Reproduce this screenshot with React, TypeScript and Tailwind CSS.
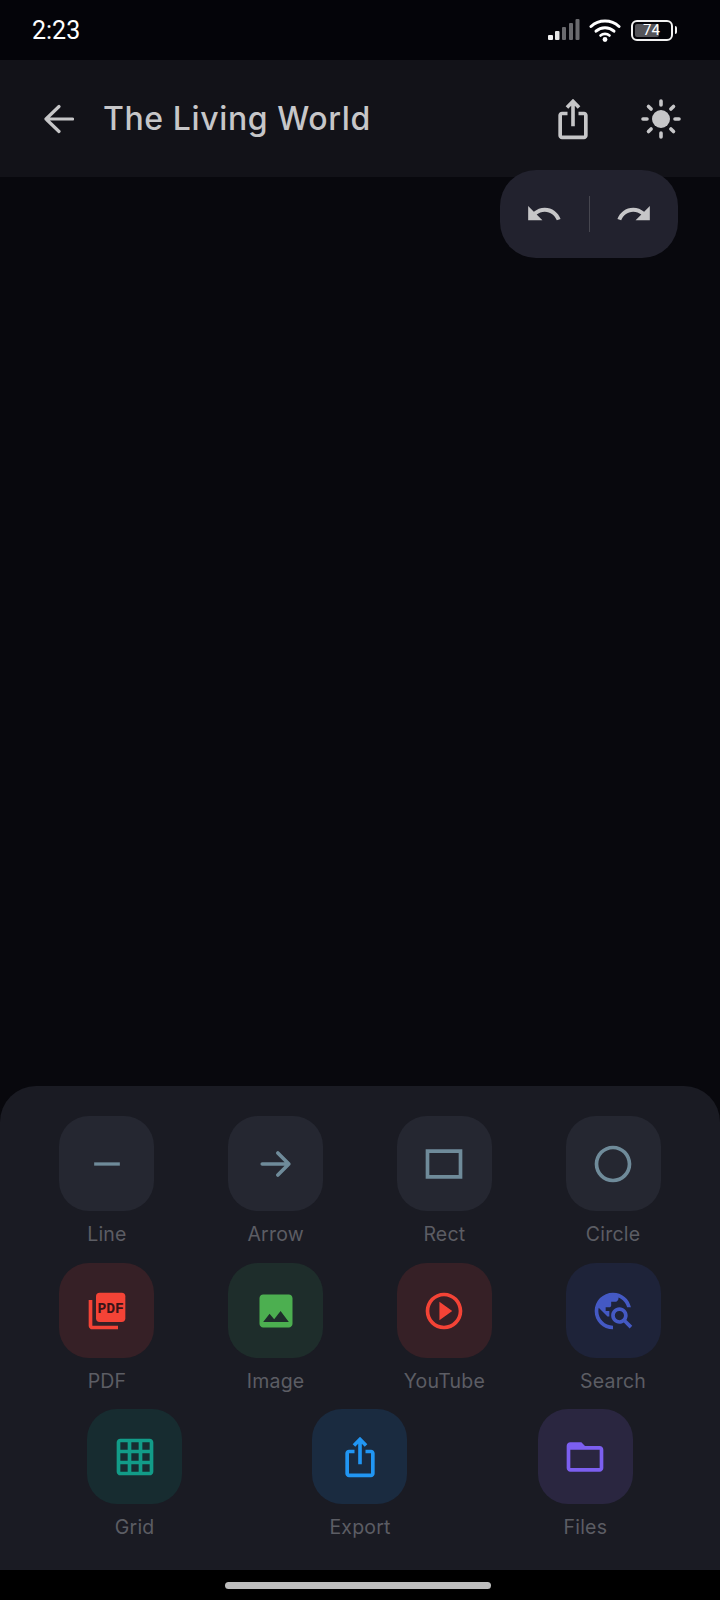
import type { ReactNode } from "react";

type Tool = {
  label: string;
  bg: string;
  color: string;
  icon: ReactNode;
};

function Icon({ className, children }: { className: string; children: ReactNode }) {
  return (
    <svg viewBox="0 0 24 24" fill="currentColor" className={className}>
      {children}
    </svg>
  );
}

const SHARE =
  "M16 5l-1.42 1.42-1.59-1.59V16h-1.98V4.83L9.42 6.42 8 5l4-4 4 4zm4 5v11c0 1.1-.9 2-2 2H6c-1.11 0-2-.9-2-2V10c0-1.11.89-2 2-2h3v2H6v11h12V10h-3V8h3c1.1 0 2 .89 2 2z";

const row1: Tool[] = [
  {
    label: "Line",
    bg: "bg-[#252731]",
    color: "text-[#6f8b9a]",
    icon: <path d="M5 11.1h14v1.8H5z" />,
  },
  {
    label: "Arrow",
    bg: "bg-[#252731]",
    color: "text-[#6f8b9a]",
    icon: (
      <path d="M4.5 12H19M13 6l6 6-6 6" fill="none" stroke="currentColor" strokeWidth="2" strokeLinecap="round" strokeLinejoin="round" />
    ),
  },
  {
    label: "Rect",
    bg: "bg-[#252731]",
    color: "text-[#6f8b9a]",
    icon: <path d="M2 4v16h20V4H2zm18 14H4V6h16v12z" />,
  },
  {
    label: "Circle",
    bg: "bg-[#252731]",
    color: "text-[#6f8b9a]",
    icon: (
      <path d="M12 2C6.47 2 2 6.47 2 12s4.47 10 10 10 10-4.47 10-10S17.53 2 12 2zm0 18c-4.41 0-8-3.59-8-8s3.59-8 8-8 8 3.59 8 8-3.59 8-8 8z" />
    ),
  },
];

const row2: Tool[] = [
  {
    label: "PDF",
    bg: "bg-[#362026]",
    color: "text-[#f44336]",
    icon: (
      <>
        <rect x="6" y="2" width="16" height="16" rx="2" />
        <path d="M4 6H2v14c0 1.1.9 2 2 2h14v-2H4V6z" />
        <text x="14" y="13" textAnchor="middle" fontSize="8" fontWeight="700" fill="#3a1418" className="font-['Liberation_Mono',monospace]">
          PDF
        </text>
      </>
    ),
  },
  {
    label: "Image",
    bg: "bg-[#1e2d2b]",
    color: "text-[#4caf50]",
    icon: (
      <path d="M21 19V5c0-1.1-.9-2-2-2H5c-1.1 0-2 .9-2 2v14c0 1.1.9 2 2 2h14c1.1 0 2-.9 2-2zM8.5 13.5l2.5 3.01L14.5 12l4.5 6H5l3.5-4.5z" />
    ),
  },
  {
    label: "YouTube",
    bg: "bg-[#362026]",
    color: "text-[#f44336]",
    icon: (
      <path d="M9.5 17V7l7 5zM12 2C6.48 2 2 6.48 2 12s4.48 10 10 10 10-4.48 10-10S17.52 2 12 2zm0 18c-4.41 0-8-3.59-8-8s3.59-8 8-8 8 3.59 8 8-3.59 8-8 8z" />
    ),
  },
  {
    label: "Search",
    bg: "bg-[#1e2339]",
    color: "text-[#4459c4]",
    icon: (
      <path d="M19.3 16.9c.4-.7.7-1.5.7-2.4 0-2.5-2-4.5-4.5-4.5S11 12 11 14.5s2 4.5 4.5 4.5c.9 0 1.7-.3 2.4-.7l3.2 3.2 1.4-1.4-3.2-3.2zm-3.8.1c-1.4 0-2.5-1.1-2.5-2.5s1.1-2.5 2.5-2.5 2.5 1.1 2.5 2.5-1.1 2.5-2.5 2.5zM12 20v2C6.48 22 2 17.52 2 12S6.48 2 12 2c4.84 0 8.87 3.44 9.8 8h-2.07c-.64-2.46-2.4-4.47-4.73-5.41V5c0 1.1-.9 2-2 2h-2v2c0 .55-.45 1-1 1H8v2h2v3H9l-4.79-4.79C4.08 10.79 4 11.38 4 12c0 4.41 3.59 8 8 8z" />
    ),
  },
];

const row3: Tool[] = [
  {
    label: "Grid",
    bg: "bg-[#172c30]",
    color: "text-[#129c88]",
    icon: (
      <path d="M20 2H4c-1.1 0-2 .9-2 2v16c0 1.1.9 2 2 2h16c1.1 0 2-.9 2-2V4c0-1.1-.9-2-2-2zM8 20H4v-4h4v4zm0-6H4v-4h4v4zm0-6H4V4h4v4zm6 12h-4v-4h4v4zm0-6h-4v-4h4v4zm0-6h-4V4h4v4zm6 12h-4v-4h4v4zm0-6h-4v-4h4v4zm0-6h-4V4h4v4z" />
    ),
  },
  {
    label: "Export",
    bg: "bg-[#1a2b40]",
    color: "text-[#2196f3]",
    icon: <path d={SHARE} />,
  },
  {
    label: "Files",
    bg: "bg-[#2a2640]",
    color: "text-[#7c5ff0]",
    icon: (
      <path d="M4 4h6l2 2h8c1.1 0 2 .9 2 2v10c0 1.1-.9 2-2 2H4c-1.1 0-2-.9-2-2V6c0-1.1.9-2 2-2zm0 4v10h16V8H4z" />
    ),
  },
];

function ToolButton({ tool }: { tool: Tool }) {
  return (
    <div className="flex flex-col items-center">
      <div className={`flex h-[95px] w-[95px] items-center justify-center rounded-[30px] ${tool.bg} ${tool.color}`}>
        <Icon className="h-[44px] w-[44px]">{tool.icon}</Icon>
      </div>
      <span className="mt-[10px] text-[19.5px] leading-[26px] tracking-[0.2px] text-[#5c5d64]">{tool.label}</span>
    </div>
  );
}

function StatusBar() {
  return (
    <div className="flex h-[60px] items-center bg-[#040409] pl-[32px] pr-[43px] text-white">
      <span className="text-[25px] font-normal leading-none font-['Roboto',sans-serif]">2:23</span>
      <div className="ml-auto flex items-center">
        {/* signal */}
        <svg viewBox="0 0 32 22" className="h-[22px] w-[32px]">
          <rect x="0" y="16" width="5" height="5" rx="1" fill="#f2f2f2" />
          <rect x="7" y="12" width="4.5" height="9" rx="1" fill="#e6e6e6" />
          <rect x="14" y="8" width="4" height="13" rx="1" fill="#6a6a6e" />
          <rect x="21" y="4" width="4" height="17" rx="1" fill="#6a6a6e" />
          <rect x="27.5" y="0" width="4" height="21" rx="1" fill="#6a6a6e" />
        </svg>
        {/* wifi */}
        <svg viewBox="0 0 32 24" fill="none" className="ml-[9px] h-[24px] w-[32px]">
          <path d="M2 8.5C9.8 1.2 22.2 1.2 30 8.5" stroke="#fff" strokeWidth="3" strokeLinecap="round" />
          <path d="M7 13.2c5-4.6 13-4.6 18 0" stroke="#fff" strokeWidth="3" strokeLinecap="round" />
          <path d="M11.5 17.5c2.5-2.2 6.5-2.2 9 0" stroke="#fff" strokeWidth="2.6" strokeLinecap="round" />
          <circle cx="16" cy="21.5" r="2.4" fill="#fff" />
        </svg>
        {/* battery */}
        <div className="ml-[10px] flex items-center">
          <div className="relative h-[21px] w-[42px] rounded-[6px] border-2 border-[#f2f2f2] p-[2px]">
            <div className="h-full w-[72%] rounded-[2px] bg-[#55555a]" />
            <span className="absolute inset-0 flex items-center justify-center text-[15px] font-normal leading-none text-white font-['Roboto',sans-serif]">
              74
            </span>
          </div>
          <div className="ml-[2px] h-[8px] w-[2.5px] rounded-r-[2px] bg-[#f2f2f2]" />
        </div>
      </div>
    </div>
  );
}

export default function App() {
  return (
    <div className="relative flex h-[1600px] w-[720px] flex-col overflow-hidden bg-[#08080d] font-['Inter',sans-serif]">
      <StatusBar />

      {/* header */}
      <div className="flex h-[117px] items-center bg-[#121218] pl-[44px] pr-[39px] text-[#c6c6c8]">
        <svg viewBox="0 0 30 30" fill="none" className="h-[30px] w-[30px]">
          <path d="M28.5 15H2M15 2.5 2 15l13 12.5" stroke="currentColor" strokeWidth="3.2" strokeLinecap="round" strokeLinejoin="round" />
        </svg>
        <h1 className="ml-[29px] text-[32px] font-[550] leading-none tracking-[0.6px]">The Living World</h1>
        <Icon className="ml-auto h-[44px] w-[44px]">
          <path d={SHARE} />
        </Icon>
        <svg viewBox="0 0 40 40" fill="none" className="ml-[46px] h-[40px] w-[40px]">
          <circle cx="20" cy="20" r="9" fill="currentColor" />
          <path
            d="M20 2v4M20 34v4M2 20h4M34 20h4M7.5 7.5l2.6 2.6M29.9 29.9l2.6 2.6M7.5 32.5l2.6-2.6M29.9 10.1l2.6-2.6"
            stroke="currentColor"
            strokeWidth="3.6"
            strokeLinecap="round"
          />
        </svg>
      </div>

      {/* canvas */}
      <div className="flex-1" />

      {/* undo / redo */}
      <div className="absolute left-[500px] top-[170px] flex h-[88px] w-[178px] items-center rounded-[36px] bg-[#22222e] text-[#c6c6c8]">
        <div className="flex flex-1 items-center justify-center">
          <Icon className="h-[38px] w-[38px]">
            <path d="M12.5 8c-2.65 0-5.05.99-6.9 2.6L2 7v9h9l-3.62-3.62c1.39-1.16 3.16-1.88 5.12-1.88 3.54 0 6.55 2.31 7.6 5.5l2.37-.78C21.08 11.03 17.15 8 12.5 8z" />
          </Icon>
        </div>
        <div className="h-[36px] w-px bg-[#46464f]" />
        <div className="flex flex-1 items-center justify-center">
          <Icon className="h-[38px] w-[38px]">
            <path d="M18.4 10.6C16.55 8.99 14.15 8 11.5 8c-4.65 0-8.58 3.03-9.96 7.22L3.9 16c1.05-3.19 4.05-5.5 7.6-5.5 1.95 0 3.73.72 5.12 1.88L13 16h9V7l-3.6 3.6z" />
          </Icon>
        </div>
      </div>

      {/* tools sheet */}
      <div className="flex h-[484px] flex-col gap-[16px] rounded-t-[36px] bg-[#1a1b23] pt-[30px]">
        <div className="grid grid-cols-4 px-[22.6px]">
          {row1.map((t) => (
            <ToolButton key={t.label} tool={t} />
          ))}
        </div>
        <div className="grid grid-cols-4 px-[22.6px]">
          {row2.map((t) => (
            <ToolButton key={t.label} tool={t} />
          ))}
        </div>
        <div className="-mt-px grid grid-cols-3 px-[22px]">
          {row3.map((t) => (
            <ToolButton key={t.label} tool={t} />
          ))}
        </div>
      </div>

      {/* nav bar */}
      <div className="flex h-[30px] items-center justify-center bg-black pr-[4px]">
        <div className="h-[7px] w-[266px] rounded-full bg-[#bdbdbd]" />
      </div>
    </div>
  );
}
